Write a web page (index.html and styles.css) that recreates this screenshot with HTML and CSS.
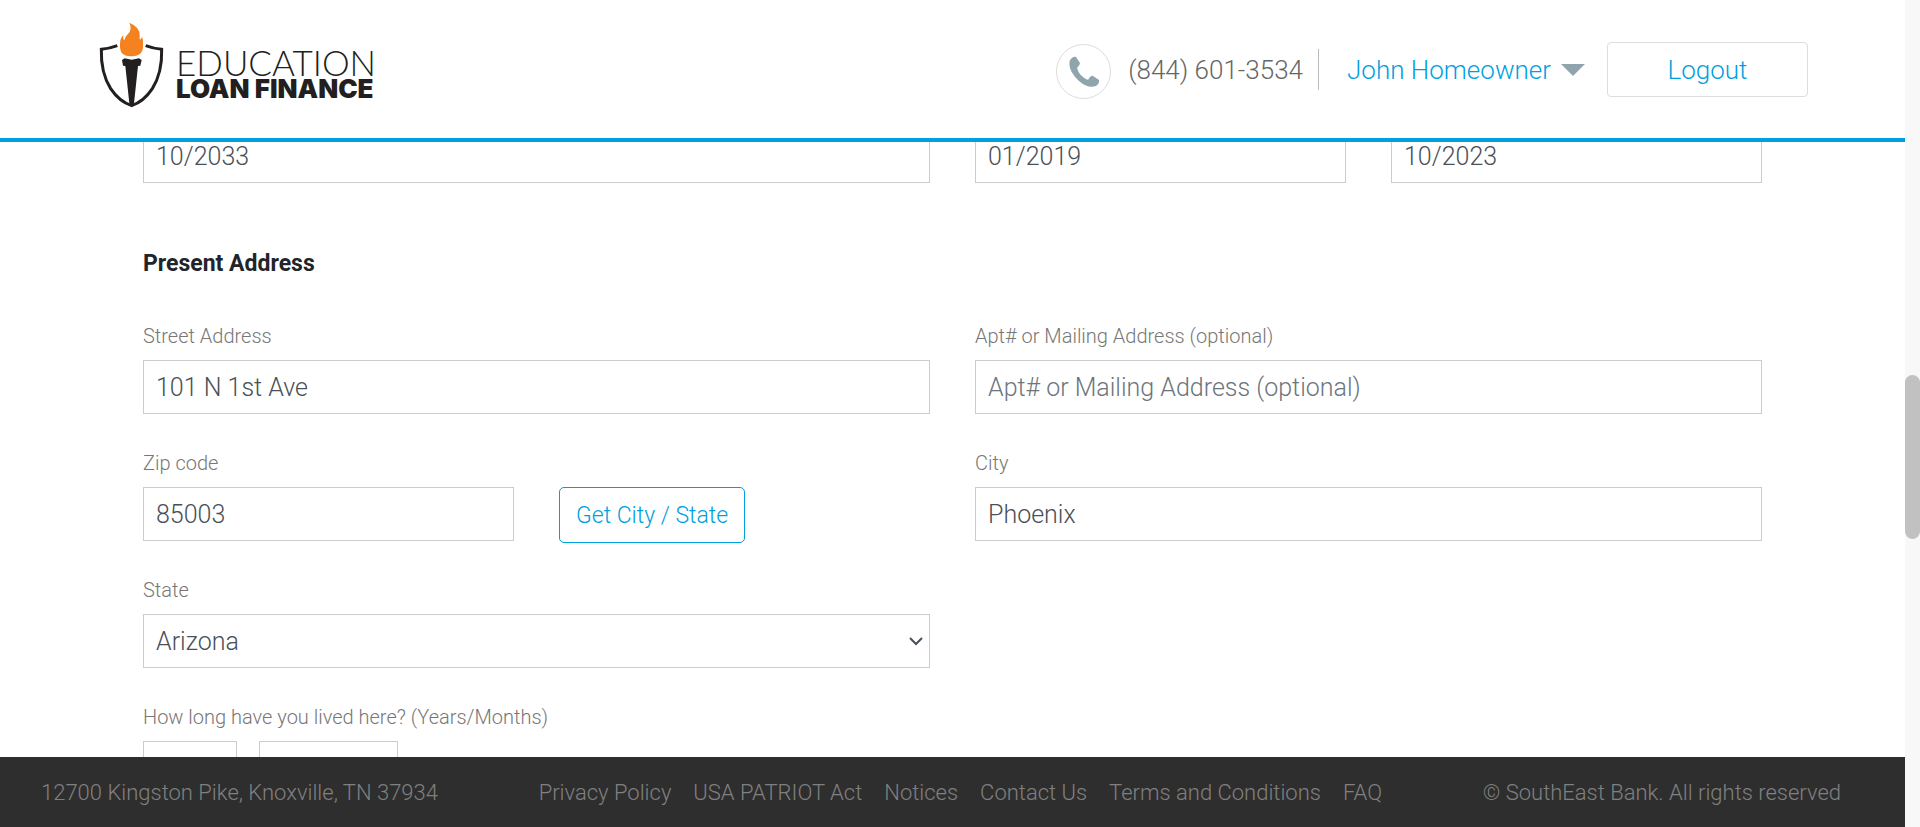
FILE: index.html
```html
<!DOCTYPE html>
<html lang="en">
<head>
<meta charset="utf-8">
<title>Education Loan Finance</title>
<link rel="stylesheet" href="styles.css">
</head>
<body>
<div class="window">
  <div class="page">
    <header class="header">
      <a class="logo" href="#">
        <svg class="logo-mark" viewBox="57 36 195 258" aria-hidden="true">
          <path d="M112 107 Q88 116 64 118 Q62 188 92 236 Q118 275 155 287 Q191 275 217 236 Q247 188 245 118 Q221 116 197 107" fill="none" stroke="#231f20" stroke-width="9"/>
          <path d="M126 150 L134 145 L155 149 L177 145 L185 150 L181 167 L174 168 L162 280 L155 288 L148 280 L136 168 L129 167 Z" fill="#231f20"/>
          <path d="M148 38 Q180 51 179 76 Q178 86 180 89 Q185 86 186 80 Q190 88 189 100 Q191 120 182 130 Q171 140 154 139 Q136 140 126 130 Q119 120 120 101 Q120 85 130 75 Q128 88 133 91 Q134 82 143 73 Q158 59 148 38Z" fill="#f58220"/>
        </svg>
        <span class="logo-words">
          <span class="logo-light">EDUCATION</span>
          <span class="logo-heavy">LOAN FINANCE</span>
        </span>
      </a>
      <div class="account">
        <a class="phone" href="tel:8446013534">
          <span class="phone-icon">
            <svg viewBox="0 0 32 32" width="32" height="32" aria-hidden="true"><path d="M2 4 Q5 0 8 1 L12 7 Q12 9 9 12 Q11 20 20 24 Q23 19 25 20 L31 24 Q32 27 28 30 Q20 33 11 25 Q-1 14 2 4Z" fill="#90a4ae"/></svg>
          </span>
          <span>(844) 601-3534</span>
        </a>
        <button class="user" type="button">John Homeowner <span class="caret"></span></button>
        <button class="logout" type="button">Logout</button>
      </div>
    </header>

    <main class="content">
      <form class="form">
        <div class="row">
          <input class="control" aria-label="Expiration date" value="10/2033">
          <div class="row">
            <input class="control" aria-label="Start date" value="01/2019">
            <input class="control" aria-label="End date" value="10/2023">
          </div>
        </div>
        <h2 class="heading">Present Address</h2>
        <div class="row">
          <div class="field"><label for="street">Street Address</label><input class="control" id="street" value="101 N 1st Ave"></div>
          <div class="field"><label for="apt">Apt# or Mailing Address (optional)</label><input class="control" id="apt" placeholder="Apt# or Mailing Address (optional)"></div>
        </div>
        <div class="row">
          <div class="row">
            <div class="field"><label for="zip">Zip code</label><input class="control" id="zip" value="85003"></div>
            <button class="lookup" type="button">Get City / State</button>
          </div>
          <div class="field"><label for="city">City</label><input class="control" id="city" value="Phoenix"></div>
        </div>
        <div class="row">
          <div class="field">
            <label for="state">State</label>
            <div class="select">
              <select class="control" id="state"><option>Arizona</option></select>
              <svg class="chevron" viewBox="0 0 14 9" width="14" height="9" aria-hidden="true"><path d="M1 1 L7 7 L13 1" fill="none" stroke="#495057" stroke-width="2"/></svg>
            </div>
          </div>
        </div>
        <div class="field">
          <label for="years">How long have you lived here? (Years/Months)</label>
          <div class="duration">
            <input class="control years" id="years">
            <input class="control months" aria-label="Months">
          </div>
        </div>
      </form>
    </main>

    <footer class="footer">
      <span>12700 Kingston Pike, Knoxville, TN 37934</span>
      <nav class="links">
        <a href="#">Privacy Policy</a>
        <a href="#">USA PATRIOT Act</a>
        <a href="#">Notices</a>
        <a href="#">Contact Us</a>
        <a href="#">Terms and Conditions</a>
        <a href="#">FAQ</a>
      </nav>
      <span>© SouthEast Bank. All rights reserved</span>
    </footer>
  </div>
  <div class="scrollbar"><div class="thumb"></div></div>
</div>
</body>
</html>
```

FILE: styles.css
```css
* { box-sizing: border-box; }

body {
  margin: 0;
  font-family: Roboto, "Liberation Sans", sans-serif;
  font-weight: 300;
  color: #212529;
  background: #fff;
}

a { color: inherit; text-decoration: none; }

button, input, select { font: inherit; }

.window {
  display: grid;
  grid-template-columns: 1fr 15px;
  height: 100vh;
}

.page {
  display: grid;
  grid-template-rows: auto 1fr auto;
  min-width: 0;
  min-height: 0;
}

.header {
  display: flex;
  justify-content: space-between;
  align-items: flex-start;
  padding: 22px 97px 27px 99px;
  border-bottom: 4px solid #009fdf;
}

.logo {
  display: flex;
  gap: 12px;
  height: 89px;
  color: #231f20;
}

.logo-mark { width: 65px; height: 86px; }

.logo-words {
  display: flex;
  flex-direction: column;
  padding-top: 23px;
  white-space: nowrap;
}

.logo-light { font-family: Lato, sans-serif; font-size: 35px; line-height: 34px; }

.logo-heavy { font-family: Inter, sans-serif; font-size: 26px; line-height: 20px; font-weight: 900; }

.account {
  display: flex;
  align-items: center;
  padding-top: 18px;
  font-size: 26px;
  white-space: nowrap;
}

.phone {
  display: flex;
  align-items: center;
  gap: 17px;
  padding-right: 15px;
  color: #666;
}

.phone-icon {
  display: grid;
  place-items: center;
  width: 55px;
  height: 55px;
  margin-top: 4px;
  border: 1px solid #ddd;
  border-radius: 50%;
}

.user {
  display: flex;
  align-items: center;
  gap: 10px;
  height: 41px;
  margin-right: 22px;
  padding: 0 0 0 28px;
  border: 0;
  border-left: 1px solid #bbb;
  background: none;
  color: #009fdf;
}

.caret {
  border: 12px solid transparent;
  border-top-color: #90a4ae;
  border-bottom: 0;
}

.logout {
  width: 201px;
  height: 55px;
  border: 1px solid #ddd;
  border-radius: 4px;
  background: #fff;
  color: #009fdf;
}

.content { overflow: hidden; min-height: 0; }

.form {
  display: flex;
  flex-direction: column;
  gap: 34px;
  margin: -13px 143px 0;
}

.row {
  display: grid;
  grid-template-columns: 1fr 1fr;
  gap: 45px;
  min-width: 0;
}

.heading {
  margin: 34px 0 10px;
  font-size: 23px;
  line-height: 26px;
  font-weight: 700;
}

.field { min-width: 0; }

.field label {
  display: block;
  padding-bottom: 8px;
  font-size: 20px;
  line-height: 31px;
  color: #777;
}

.control {
  display: block;
  width: 100%;
  height: 54px;
  min-width: 0;
  padding: 0 12px;
  border: 1px solid #ccc;
  border-radius: 0;
  background: #fff;
  color: #495057;
  font-size: 25px;
}

.control::placeholder { color: #6c757d; opacity: 1; }

.lookup {
  align-self: end;
  justify-self: start;
  height: 56px;
  margin-bottom: -2px;
  padding: 0 16px;
  border: 1px solid #009fdf;
  border-radius: 5px;
  background: #fff;
  color: #009fdf;
  font-size: 23px;
}

.select { position: relative; }

.select .control { appearance: none; }

.chevron {
  position: absolute;
  right: 7px;
  top: 23px;
  pointer-events: none;
}

.duration { display: flex; gap: 22px; }

.years { width: 94px; }

.months { width: 139px; }

.footer {
  display: flex;
  justify-content: space-between;
  align-items: center;
  height: 70px;
  padding: 0 64px 0 41px;
  background: #2e2e2e;
  color: #808080;
  font-size: 22px;
  white-space: nowrap;
}

.links { display: flex; gap: 22px; }

.scrollbar { padding-top: 375px; background: #f8f8f8; }

.thumb { height: 164px; border-radius: 8px; background: #c1c1c1; }
```
